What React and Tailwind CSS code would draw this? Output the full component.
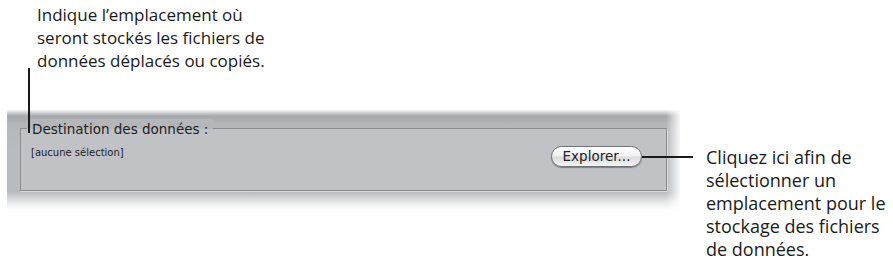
export default function App() {
  const callout = { fontFamily: '"Open Sans", "Liberation Sans", sans-serif' };
  const ui = { fontFamily: '"DejaVu Sans", "Liberation Sans", sans-serif' };
  return (
    <div className="relative w-[893px] h-[273px] bg-white overflow-hidden flex text-[#1a1a1a]">
      <div className="w-[690px] shrink-0 flex flex-col">
        <div className="pl-[37px] pt-[3px] text-[17px] leading-[23px] whitespace-nowrap" style={callout}>
          <div>Indique l’emplacement où</div>
          <div>seront stockés les fichiers de</div>
          <div>données déplacés ou copiés.</div>
        </div>
        <div className="ml-[7px] mt-[38px] w-[673px] h-[100px] relative flex flex-col px-[13px] pt-[18px] bg-[linear-gradient(to_bottom,#f2f3f4_0px,#a6a8ab_6px,#b4b6b9_14px,#b9bbbe_40px,#b9bbbe_82px,#e6e7e8_92px,#ffffff_100px)]">
          <div className="absolute inset-y-0 right-0 w-[14px] bg-[linear-gradient(to_right,rgba(255,255,255,0),rgba(255,255,255,0.55)_60%,rgba(255,255,255,0.9))]" />
          <div className="relative h-[63px] border border-[#8a8c8f] bg-[#c0c2c5] shadow-[1px_1px_0_#d8dadc] flex items-start justify-between pl-[10px] pr-[24px]">
            <div className="absolute left-[6px] -top-[10px] px-[5px] bg-[linear-gradient(to_bottom,#b4b6b9_50%,#c0c2c5_50%)] text-[13.5px] leading-[20px] text-[#1e1e1e]" style={ui}>
              Destination des données :
            </div>
            <div className="mt-[18px] text-[10px] leading-[12px] text-[#222]" style={ui}>
              [aucune sélection]
            </div>
            <div className="mt-[17px] w-[91px] h-[21px] rounded-full border border-[#6f7174] bg-[linear-gradient(to_bottom,#ffffff,#f1f1f1_45%,#dcdcdc_55%,#f4f4f4)] shadow-[0_1px_1px_rgba(0,0,0,0.35)] flex items-center justify-center text-[13.5px] text-[#222]" style={ui}>
              Explorer...
            </div>
          </div>
        </div>
      </div>
      <div className="pl-[16px] pt-[146px] text-[18px] leading-[23px] whitespace-nowrap" style={callout}>
        <div>Cliquez ici afin de</div>
        <div>sélectionner un</div>
        <div>emplacement pour le</div>
        <div>stockage des fichiers</div>
        <div>de données.</div>
      </div>
      <div className="absolute left-[28px] top-[68px] w-[2px] h-[65px] bg-[#1a1a1a]" />
      <div className="absolute left-[642px] top-[156px] w-[51px] h-[2px] bg-[#1a1a1a]" />
    </div>
  );
}
